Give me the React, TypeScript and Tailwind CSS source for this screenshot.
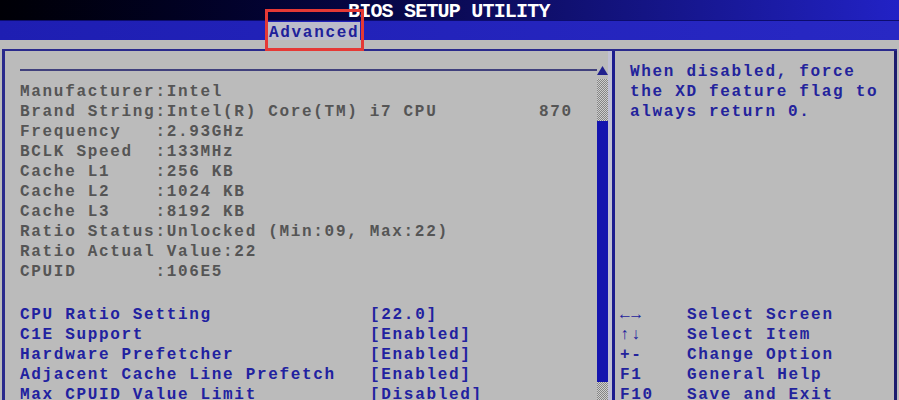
const info = [
  "Manufacturer:Intel",
  "Brand String:Intel(R) Core(TM) i7 CPU         870",
  "Frequency   :2.93GHz",
  "BCLK Speed  :133MHz",
  "Cache L1    :256 KB",
  "Cache L2    :1024 KB",
  "Cache L3    :8192 KB",
  "Ratio Status:Unlocked (Min:09, Max:22)",
  "Ratio Actual Value:22",
  "CPUID       :106E5",
];

const settings: [string, string][] = [
  ["CPU Ratio Setting", "[22.0]"],
  ["C1E Support", "[Enabled]"],
  ["Hardware Prefetcher", "[Enabled]"],
  ["Adjacent Cache Line Prefetch", "[Enabled]"],
  ["Max CPUID Value Limit", "[Disabled]"],
];

const legend: [string, string][] = [
  ["←→", "Select Screen"],
  ["↑↓", "Select Item"],
  ["+-", "Change Option"],
  ["F1", "General Help"],
  ["F10", "Save and Exit"],
];

const checker =
  "bg-[image:repeating-conic-gradient(#858585_0%_25%,#cfcfcf_0%_50%)] bg-[length:2px_2px]";

function Scrollbar() {
  return (
    <div className="flex w-[11px] shrink-0 flex-col">
      <svg width="11" height="9" viewBox="0 0 11 9" className="mt-[15px] shrink-0">
        <path d="M5.5 0 L11 9 L0 9 Z" fill="#20208e" />
      </svg>
      <div className={`mt-[4px] h-[42px] shrink-0 ${checker}`} />
      <div className="h-[261px] shrink-0 bg-[#1414ae]" />
      <div className={`h-[60px] shrink-0 ${checker}`} />
    </div>
  );
}

export default function App() {
  return (
    <div className="relative h-[400px] w-[899px] overflow-hidden bg-[#bbbbbb] font-['Liberation_Mono','DejaVu_Sans_Mono',monospace] text-[16px] font-bold leading-5 tracking-[1.68px]">
      {/* title bar */}
      <div className="h-5 overflow-hidden bg-gradient-to-r from-[#000006] via-[#0a0a55] to-[#2222c6] pl-[348px]">
        <div className="mt-[2px] whitespace-pre text-[20px] leading-5 tracking-[-0.8px] text-white">
          BIOS SETUP UTILITY
        </div>
      </div>

      {/* tab bar */}
      <div className="flex h-5 border-t border-[#0c0c70] bg-gradient-to-r from-[#1e1eb2] to-[#2828c4] pl-[268px]">
        <div className="mt-px h-[18px] w-[92px] overflow-hidden bg-[#bcbccb] pl-px text-[#20209a]">
          <div className="mt-px">Advanced</div>
        </div>
      </div>

      {/* main frame */}
      <div className="mx-[2px] mt-[9px] flex h-[360px] border-l-[3px] border-t-2 border-[#2a2a8c]">
        {/* left panel */}
        <div className="flex w-[603px] shrink-0">
          <div className="w-[592px] shrink-0 pl-[15px]">
            <div className="h-[31px] pt-[18px]">
              <div className="h-[2px] w-[577px] bg-[#40407c]" />
            </div>
            <div className="whitespace-pre text-[#555555]">
              {info.map((line) => (
                <div key={line}>{line}</div>
              ))}
            </div>
            <div className="mt-[23px] whitespace-pre text-[#2121a0]">
              {settings.map(([label, value]) => (
                <div key={label} className="flex">
                  <span className="w-[350px]">{label}</span>
                  <span>{value}</span>
                </div>
              ))}
            </div>
          </div>
          <Scrollbar />
        </div>

        {/* divider */}
        <div className="w-[4px] shrink-0 bg-[#c0c0d4]" />
        <div className="w-[3px] shrink-0 bg-[#1c1c8e]" />

        {/* right panel */}
        <div className="flex-1 border-r-[3px] border-[#1c1c6e] text-[#23239c]">
          <div className="whitespace-pre pl-[15px] pt-[11px]">
            <div>When disabled, force</div>
            <div>the XD feature flag to</div>
            <div>always return 0.</div>
          </div>
          <div className="mt-[183px] whitespace-pre pl-[5px]">
            {legend.map(([key, desc]) => (
              <div key={key} className="flex">
                <span className="w-[67px]">{key}</span>
                <span>{desc}</span>
              </div>
            ))}
          </div>
        </div>
      </div>

      {/* highlight annotation */}
      <div className="absolute left-[265px] top-[9px] h-[42px] w-[99px] border-[3px] border-[#e53935]" />
    </div>
  );
}
